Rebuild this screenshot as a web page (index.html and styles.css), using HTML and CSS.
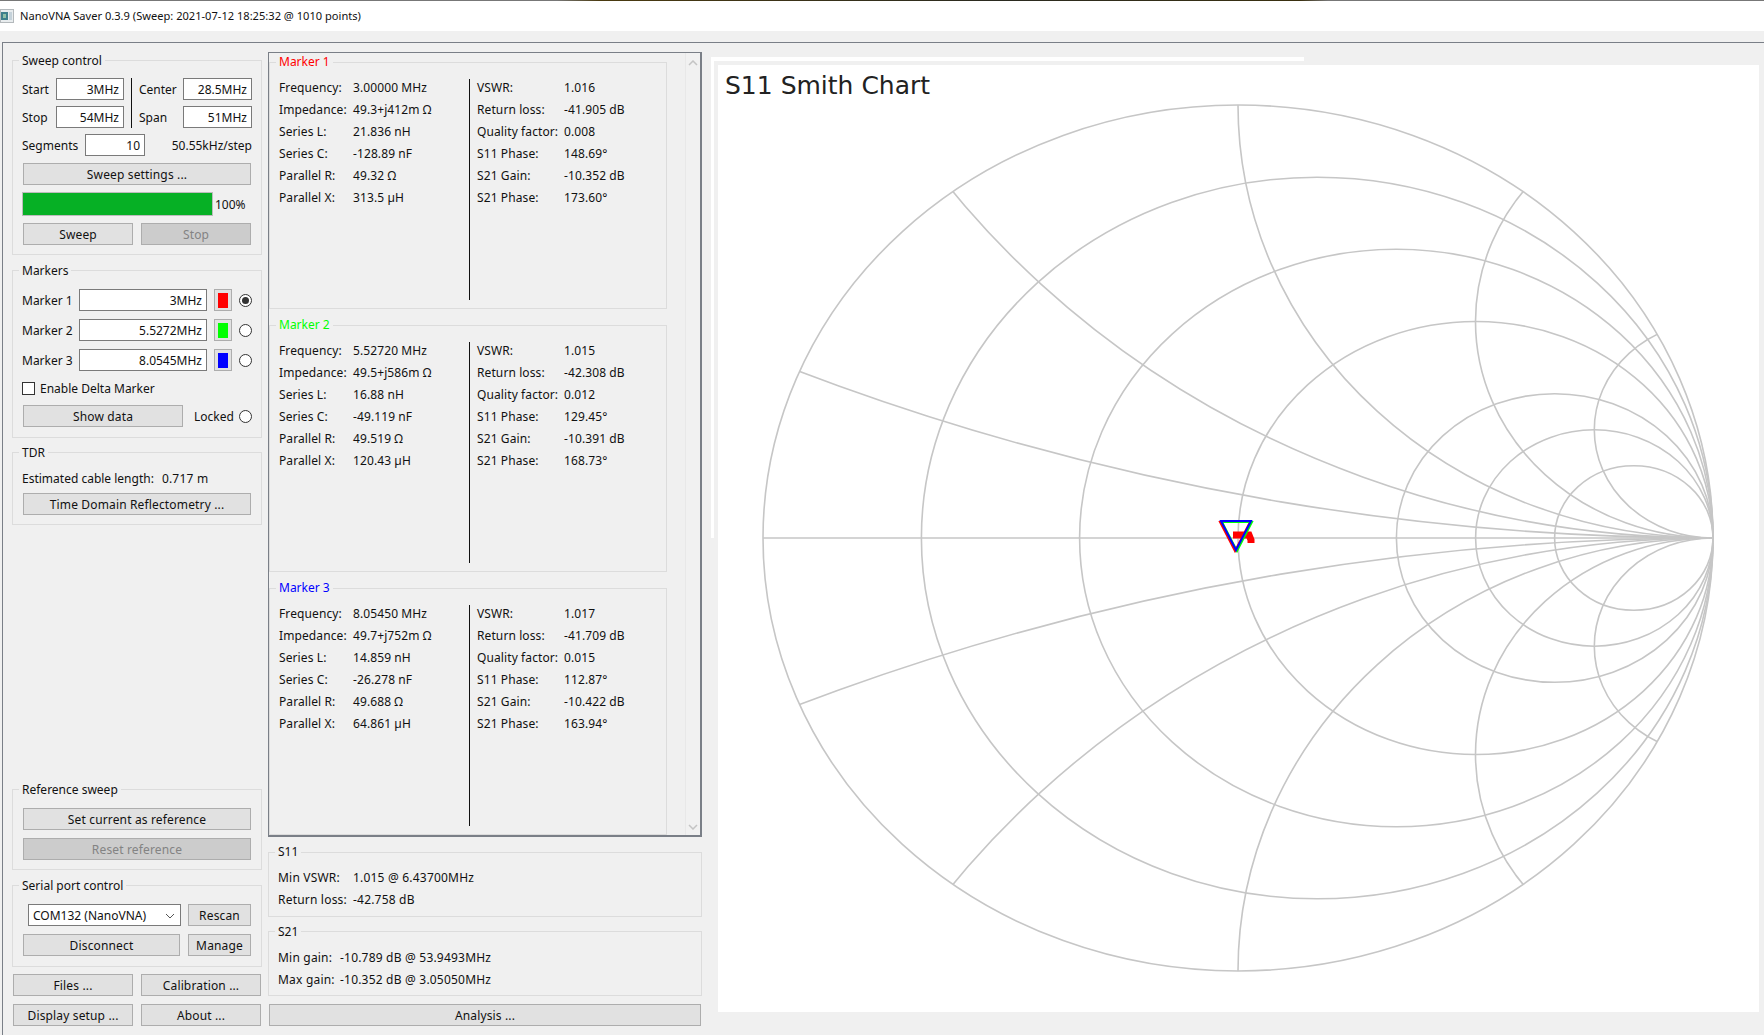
FILE: index.html
```html
<!DOCTYPE html>
<html lang="en">

<head>
    <meta charset="UTF-8">
    <title>NanoVNA Saver 0.3.9</title>
    <link rel="stylesheet" href="styles.css">
</head>

<body>

    <div class="topline"></div>
    <div class="titlebar">
        <svg class="appicon" width="14" height="14" viewBox="0 0 14 14">
            <rect x="0.5" y="0.5" width="13" height="13" fill="#e8ecee" stroke="#b4b9bc"/>
            <rect x="1" y="3" width="7" height="8" fill="#3d7f8c"/>
            <rect x="3" y="5" width="3" height="4" fill="#8fc0a8"/>
            <rect x="9" y="3" width="3" height="8" fill="#c5d2da"/>
        </svg>
        <span>NanoVNA Saver 0.3.9 (Sweep: 2021-07-12 18:25:32 @ 1010 points)</span>
    </div>

    <div class="main">

        <div class="leftcol">
            <fieldset class="group sweepbox">
                <legend>Sweep control</legend>
                <div class="freqs">
                    <div class="freqcol">
                        <div class="row"><label class="lb-start">Start</label><input class="field w-freq" value="3MHz"></div>
                        <div class="row"><label class="lb-start">Stop</label><input class="field w-freq" value="54MHz"></div>
                    </div>
                    <div class="vline"></div>
                    <div class="freqcol">
                        <div class="row"><label class="lb-center">Center</label><input class="field w-freq2" value="28.5MHz"></div>
                        <div class="row"><label class="lb-center">Span</label><input class="field w-freq2" value="51MHz"></div>
                    </div>
                </div>
                <div class="row segs">
                    <label class="lb-seg">Segments</label><input class="field w-seg" value="10">
                    <span class="step">50.55kHz/step</span>
                </div>
                <button class="btn wide">Sweep settings ...</button>
                <div class="progress">
                    <div class="bar"><div class="fill"></div></div>
                    <span class="pct">100%</span>
                </div>
                <div class="btnrow">
                    <button class="btn half">Sweep</button>
                    <button class="btn half" disabled>Stop</button>
                </div>
            </fieldset>

            <fieldset class="group markersbox">
                <legend>Markers</legend>
                <div class="mrow">
                    <label class="lb-marker">Marker 1</label><input class="field w-marker" value="3MHz">
                    <button class="swatchbtn"><i class="sw red"></i></button>
                    <span class="radio on"></span>
                </div>
                <div class="mrow">
                    <label class="lb-marker">Marker 2</label><input class="field w-marker" value="5.5272MHz">
                    <button class="swatchbtn"><i class="sw green"></i></button>
                    <span class="radio"></span>
                </div>
                <div class="mrow">
                    <label class="lb-marker">Marker 3</label><input class="field w-marker" value="8.0545MHz">
                    <button class="swatchbtn"><i class="sw blue"></i></button>
                    <span class="radio"></span>
                </div>
                <div class="check"><span class="box"></span>Enable Delta Marker</div>
                <div class="showrow">
                    <button class="btn show">Show data</button>
                    <span class="locked">Locked</span>
                    <span class="radio"></span>
                </div>
            </fieldset>

            <fieldset class="group tdrbox">
                <legend>TDR</legend>
                <div class="tdrline"><span class="tdrlabel">Estimated cable length:</span><span class="tdrvalue">0.717 m</span></div>
                <button class="btn wide">Time Domain Reflectometry ...</button>
            </fieldset>

            <div class="spacer"></div>

            <fieldset class="group refbox">
                <legend>Reference sweep</legend>
                <button class="btn wide">Set current as reference</button>
                <button class="btn wide next" disabled>Reset reference</button>
            </fieldset>

            <fieldset class="group serialbox">
                <legend>Serial port control</legend>
                <div class="serialrow">
                    <div class="combo">COM132 (NanoVNA)
                        <svg width="10" height="6" viewBox="0 0 10 6"><path d="M1 1l4 4 4-4" fill="none" stroke="#555"/></svg>
                    </div>
                    <button class="btn side">Rescan</button>
                </div>
                <div class="serialrow second">
                    <button class="btn disconnect">Disconnect</button>
                    <button class="btn side">Manage</button>
                </div>
            </fieldset>

            <div class="bottombtns">
                <button class="btn half">Files ...</button>
                <button class="btn half">Calibration ...</button>
                <button class="btn half">Display setup ...</button>
                <button class="btn half">About ...</button>
            </div>
        </div>

        <div class="midcol">
            <div class="scrollframe">
                <div class="markerlist">
                    <fieldset class="group mbox">
                        <legend class="t-red">Marker 1</legend>
                        <div class="mdata">
                            <div class="mcol left">
                                <div>Frequency:</div><div>3.00000 MHz</div>
                                <div>Impedance:</div><div>49.3+j412m Ω</div>
                                <div>Series L:</div><div>21.836 nH</div>
                                <div>Series C:</div><div>-128.89 nF</div>
                                <div>Parallel R:</div><div>49.32 Ω</div>
                                <div>Parallel X:</div><div>313.5 µH</div>
                            </div>
                            <div class="mvline"></div>
                            <div class="mcol right">
                                <div>VSWR:</div><div>1.016</div>
                                <div>Return loss:</div><div>-41.905 dB</div>
                                <div>Quality factor:</div><div>0.008</div>
                                <div>S11 Phase:</div><div>148.69°</div>
                                <div>S21 Gain:</div><div>-10.352 dB</div>
                                <div>S21 Phase:</div><div>173.60°</div>
                            </div>
                        </div>
                    </fieldset>
                    <fieldset class="group mbox">
                        <legend class="t-green">Marker 2</legend>
                        <div class="mdata">
                            <div class="mcol left">
                                <div>Frequency:</div><div>5.52720 MHz</div>
                                <div>Impedance:</div><div>49.5+j586m Ω</div>
                                <div>Series L:</div><div>16.88 nH</div>
                                <div>Series C:</div><div>-49.119 nF</div>
                                <div>Parallel R:</div><div>49.519 Ω</div>
                                <div>Parallel X:</div><div>120.43 µH</div>
                            </div>
                            <div class="mvline"></div>
                            <div class="mcol right">
                                <div>VSWR:</div><div>1.015</div>
                                <div>Return loss:</div><div>-42.308 dB</div>
                                <div>Quality factor:</div><div>0.012</div>
                                <div>S11 Phase:</div><div>129.45°</div>
                                <div>S21 Gain:</div><div>-10.391 dB</div>
                                <div>S21 Phase:</div><div>168.73°</div>
                            </div>
                        </div>
                    </fieldset>
                    <fieldset class="group mbox">
                        <legend class="t-blue">Marker 3</legend>
                        <div class="mdata">
                            <div class="mcol left">
                                <div>Frequency:</div><div>8.05450 MHz</div>
                                <div>Impedance:</div><div>49.7+j752m Ω</div>
                                <div>Series L:</div><div>14.859 nH</div>
                                <div>Series C:</div><div>-26.278 nF</div>
                                <div>Parallel R:</div><div>49.688 Ω</div>
                                <div>Parallel X:</div><div>64.861 µH</div>
                            </div>
                            <div class="mvline"></div>
                            <div class="mcol right">
                                <div>VSWR:</div><div>1.017</div>
                                <div>Return loss:</div><div>-41.709 dB</div>
                                <div>Quality factor:</div><div>0.015</div>
                                <div>S11 Phase:</div><div>112.87°</div>
                                <div>S21 Gain:</div><div>-10.422 dB</div>
                                <div>S21 Phase:</div><div>163.94°</div>
                            </div>
                        </div>
                    </fieldset>
                </div>
                <div class="scrollbar">
                    <svg width="10" height="6" viewBox="0 0 10 6"><path d="M1 5l4-4 4 4" fill="none" stroke="#c4c4c4" stroke-width="1.5"/></svg>
                    <svg width="10" height="6" viewBox="0 0 10 6"><path d="M1 1l4 4 4-4" fill="none" stroke="#c4c4c4" stroke-width="1.5"/></svg>
                </div>
            </div>

            <fieldset class="group sbox">
                <legend>S11</legend>
                <div class="sdata s11">
                    <div>Min VSWR:</div><div>1.015 @ 6.43700MHz</div>
                    <div>Return loss:</div><div>-42.758 dB</div>
                </div>
            </fieldset>
            <fieldset class="group sbox second">
                <legend>S21</legend>
                <div class="sdata s21">
                    <div>Min gain:</div><div>-10.789 dB @ 53.9493MHz</div>
                    <div>Max gain:</div><div>-10.352 dB @ 3.05050MHz</div>
                </div>
            </fieldset>
            <button class="btn analysis">Analysis ...</button>
        </div>

        <div class="chartcol">
            <div class="stale-top"></div>
            <div class="stale-left"></div>
            <div class="chart">
                <div class="charttitle">S11 Smith Chart</div>
                <svg class="smith" width="1041" height="947" viewBox="0 0 1041 947">
                    <defs>
                        <clipPath id="unit"><ellipse cx="520" cy="473" rx="475" ry="433"/></clipPath>
                    </defs>
                    <g fill="none" stroke="#c6c6c6" stroke-width="1.6">
                        <ellipse cx="520" cy="473" rx="475" ry="433"/>
                        <line x1="45" y1="473" x2="995" y2="473"/>
                        <!-- constant resistance -->
                        <ellipse cx="599.2" cy="473" rx="395.8" ry="360.8"/>
                        <ellipse cx="678.3" cy="473" rx="316.7" ry="288.7"/>
                        <ellipse cx="757.5" cy="473" rx="237.5" ry="216.5"/>
                        <ellipse cx="836.7" cy="473" rx="158.3" ry="144.3"/>
                        <ellipse cx="876.3" cy="473" rx="118.7" ry="108.2"/>
                        <ellipse cx="915.8" cy="473" rx="79.2" ry="72.2"/>
                        <!-- constant reactance, clipped to the outer circle -->
                        <g clip-path="url(#unit)">
                            <ellipse cx="995" cy="-1692" rx="2375" ry="2165"/>
                            <ellipse cx="995" cy="2638" rx="2375" ry="2165"/>
                            <ellipse cx="995" cy="-393" rx="950" ry="866"/>
                            <ellipse cx="995" cy="1339" rx="950" ry="866"/>
                            <ellipse cx="995" cy="40" rx="475" ry="433"/>
                            <ellipse cx="995" cy="906" rx="475" ry="433"/>
                            <ellipse cx="995" cy="256.5" rx="237.5" ry="216.5"/>
                            <ellipse cx="995" cy="689.5" rx="237.5" ry="216.5"/>
                            <ellipse cx="995" cy="364.8" rx="118.7" ry="108.2"/>
                            <ellipse cx="995" cy="581.2" rx="118.7" ry="108.2"/>
                        </g>
                        <!-- sweep traces and markers -->
                        <path d="M515 470h10l6 0 2 5v3" stroke="#f00" stroke-width="7"/>
                        <path d="M503 456h30l-15 29z" stroke="#f00" stroke-width="2" transform="translate(-1 1)"/>
                        <path d="M503 456h30l-15 29z" stroke="#0f0" stroke-width="2" transform="translate(1 1)"/>
                        <path d="M503 456h30l-15 29z" stroke="#00f" stroke-width="2"/>
                    </g>
                </svg>
            </div>
        </div>

    </div>

</body>

</html>
```

FILE: styles.css
```css
* {
    margin: 0;
    padding: 0;
    box-sizing: border-box;
}

body {
    width: 1764px;
    height: 1035px;
    overflow: hidden;
    background-color: #f0f0f0;
    color: #111;
    font-family: "Noto Sans", sans-serif;
    font-size: 12px;
    line-height: 16px;
}

.topline {
    height: 1px;
    background: linear-gradient(to right, #777 557px, #4a3a10 600px, #2a2a20 1000px, #3a3010 1300px, #777 1328px);
}

.titlebar {
    height: 30px;
    background: #fff;
    display: flex;
    align-items: center;
    gap: 6px;
    font-size: 11.1px;
}

.main {
    display: flex;
    height: 993px;
    margin-top: 11px;
    margin-left: 2px;
    border-top: 1px solid #7a7f87;
    border-left: 1px solid #7a7f87;
}

/* left column */
.leftcol {
    width: 263px;
    padding: 9px 4px 9px 9px;
    display: flex;
    flex-direction: column;
}

.group {
    border: 1px solid #dcdcdc;
    min-width: 0;
}

.group legend {
    margin-left: -3px;
    padding: 1px 3px 0;
    height: 16px;
}

.sweepbox { height: 203px; padding: 10px 9px 0; }
.markersbox { height: 176px; margin-top: 7px; padding: 11px 9px 0; }
.tdrbox { height: 81px; margin-top: 6px; padding: 10px 9px 0; }
.refbox { height: 89px; padding: 11px 9px 0; }
.serialbox { height: 90px; margin-top: 7px; padding: 11px 9px 0; }

.spacer { flex: 1; }

.row {
    display: flex;
    align-items: center;
    height: 22px;
}

.row label, .mrow label {
    padding-top: 1px;
}

.field {
    height: 22px;
    border: 1px solid #7a7a7a;
    background: #fff;
    text-align: right;
    padding: 0 4px;
    font: inherit;
    color: inherit;
    outline: none;
}

.freqs { display: flex; }
.freqcol { display: flex; flex-direction: column; gap: 6px; }
.lb-start { width: 34px; }
.lb-center { width: 44px; }
.w-freq { width: 68px; }
.w-freq2 { width: 69px; }
.vline { width: 1px; background: #111; margin: 0 7px; }

.segs { margin-top: 6px; }
.lb-seg { width: 63px; }
.w-seg { width: 60px; }
.step { margin-left: auto; padding-top: 1px; }

.btn {
    height: 22px;
    border: 1px solid #adadad;
    background: #e1e1e1;
    font: inherit;
    color: inherit;
    letter-spacing: 0.15px;
    padding-top: 2px;
}

.btn:disabled {
    background: #cccccc;
    color: #838383;
}

.wide { display: block; width: 228px; margin-left: 1px; }
.next { margin-top: 8px; }
.sweepbox .wide { margin-top: 7px; }

.progress {
    display: flex;
    align-items: center;
    gap: 2px;
    margin-top: 7px;
}

.pct { padding-top: 2px; }

.bar {
    width: 191px;
    height: 24px;
    border: 1px solid #bcbcbc;
    background: #e6e6e6;
}

.fill { height: 100%; background: #06b025; }

.btnrow {
    display: flex;
    gap: 8px;
    margin: 7px 0 0 1px;
}

.half { width: 110px; }

.mrow {
    display: flex;
    align-items: center;
    height: 22px;
    margin-bottom: 8px;
}

.lb-marker { width: 57px; }
.w-marker { width: 128px; }

.swatchbtn {
    width: 18px;
    height: 22px;
    margin-left: 7px;
    border: 1px solid #adadad;
    background: #e1e1e1;
    display: flex;
    align-items: center;
    justify-content: center;
}

.sw { display: block; width: 10px; height: 15px; }
.red { background: #f00; }
.green { background: #0f0; }
.blue { background: #00f; }

.radio {
    width: 13px;
    height: 13px;
    margin-left: 7px;
    border: 1px solid #333;
    border-radius: 50%;
    background: #fff;
    position: relative;
}

.radio.on::after {
    content: "";
    position: absolute;
    left: 2px;
    top: 2px;
    width: 7px;
    height: 7px;
    border-radius: 50%;
    background: #333;
}

.check {
    display: flex;
    align-items: center;
    height: 17px;
    padding-top: 2px;
}

.box {
    width: 13px;
    height: 13px;
    margin-right: 5px;
    border: 1px solid #333;
    background: #fff;
}

.showrow {
    display: flex;
    align-items: center;
    margin: 9px 0 0 1px;
}

.show { width: 160px; }
.locked { margin-left: 11px; width: 38px; padding-top: 1px; }

.tdrline { height: 16px; padding-top: 1px; }
.tdrlabel { margin-right: 8px; }
.tdrvalue { letter-spacing: 0.2px; }
.tdrbox .wide { margin-top: 7px; }

.serialrow { display: flex; gap: 7px; }
.serialrow.second { margin-top: 8px; margin-left: 1px; }

.combo {
    width: 153px;
    height: 22px;
    margin-left: 6px;
    border: 1px solid #7a7a7a;
    background: #fff;
    padding: 2px 5px 1px 4px;
    display: flex;
    justify-content: space-between;
    align-items: center;
}

.side { width: 63px; }
.disconnect { width: 157px; margin-right: 1px; }

.bottombtns {
    display: grid;
    grid-template-columns: 120px 120px;
    gap: 8px;
    margin-top: 7px;
    margin-left: 1px;
}

.bottombtns .half { width: 120px; }

/* middle column */
.midcol {
    width: 434px;
    margin-left: 2px;
    padding-top: 9px;
    display: flex;
    flex-direction: column;
}

.scrollframe {
    height: 785px;
    flex-shrink: 0;
    border: 1px solid #7a7f87;
    border-width: 1px 2px 2px 1px;
    display: flex;
    overflow: hidden;
}

.markerlist {
    width: 398px;
    padding-top: 1px;
    display: flex;
    flex-direction: column;
    gap: 8px;
}

.mbox {
    height: 255px;
    flex-shrink: 0;
}

.group.mbox legend { margin-left: 6px; padding-top: 0; }
.t-red { color: #f00; }
.t-green { color: #0f0; }
.t-blue { color: #00f; }

.mdata {
    display: flex;
    margin-top: 7px;
}

.mcol {
    display: grid;
    grid-auto-rows: 22px;
    align-items: center;
    align-content: start;
    letter-spacing: 0.1px;
}

.mcol.left {
    width: 199px;
    padding-left: 9px;
    grid-template-columns: 74px 1fr;
}

.mvline {
    width: 1px;
    height: 221px;
    margin-top: 2px;
    background: #111;
}

.mcol.right {
    padding-left: 7px;
    grid-template-columns: 87px 1fr;
}

.scrollbar {
    margin-left: 18px;
    flex: 1;
    background: #f1f1f1;
    border-left: 1px solid #e8e8e8;
    display: flex;
    flex-direction: column;
    justify-content: space-between;
    align-items: center;
    padding: 7px 0 5px;
}

.sbox {
    height: 73px;
    flex-shrink: 0;
    margin-top: 7px;
}

.sbox.second { margin-top: 6px; }
.group.sbox legend { margin-left: 6px; padding-top: 0; }
.group.sbox.second legend { padding-top: 1px; }

.sdata {
    display: grid;
    grid-auto-rows: 22px;
    align-items: center;
    padding: 7px 0 0 9px;
    letter-spacing: 0.2px;
}

.s11 { grid-template-columns: 75px 1fr; }
.s21 { grid-template-columns: 62px 1fr; padding-top: 8px; }

.analysis { width: 432px; flex-shrink: 0; margin: 8px 0 0 1px; }

/* chart */
.chartcol {
    position: relative;
    flex: 1;
}

.stale-top {
    position: absolute;
    left: 9px;
    top: 14px;
    width: 593px;
    height: 4px;
    background: #fff;
}

.stale-left {
    position: absolute;
    left: 9px;
    top: 14px;
    width: 3px;
    height: 481px;
    background: #fff;
}

.chart {
    position: absolute;
    left: 16px;
    top: 22px;
    width: 1041px;
    height: 947px;
    background: #fff;
}

.charttitle {
    position: absolute;
    left: 7px;
    top: 6px;
    font-family: "DejaVu Sans", sans-serif;
    font-size: 25px;
    line-height: 30px;
    color: #222;
}

.smith { display: block; }
```
